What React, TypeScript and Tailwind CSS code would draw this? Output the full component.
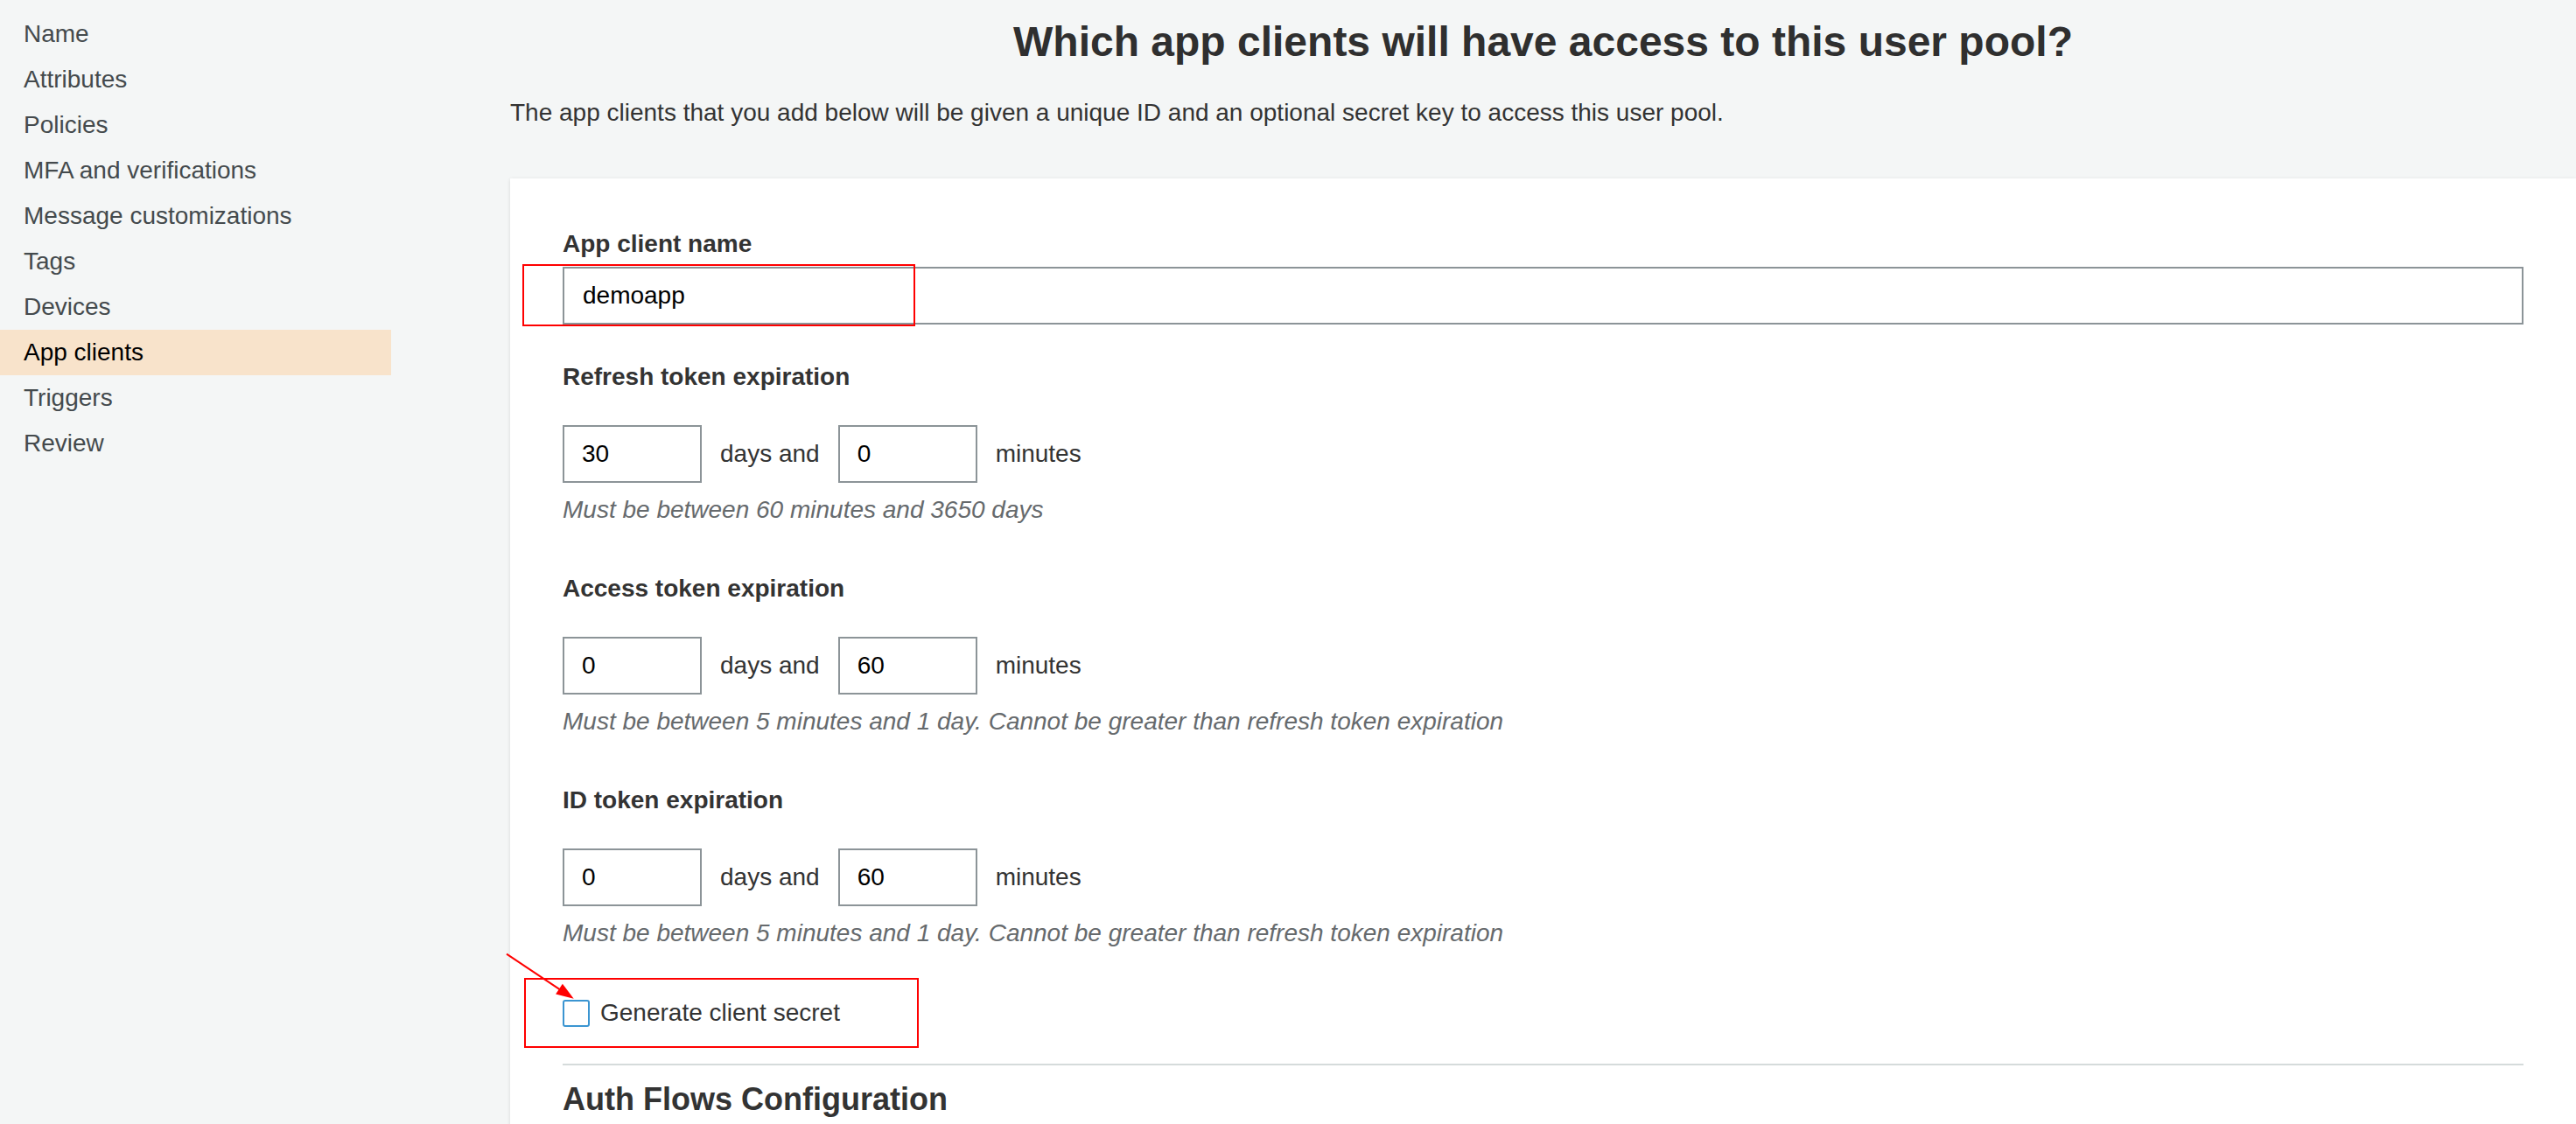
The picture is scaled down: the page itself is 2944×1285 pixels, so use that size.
import React from "react";

const navItems = [
  "Name",
  "Attributes",
  "Policies",
  "MFA and verifications",
  "Message customizations",
  "Tags",
  "Devices",
  "App clients",
  "Triggers",
  "Review",
];

const Sidebar = () => (
  <nav className="w-[447px] shrink-0 pt-[13px]">
    {navItems.map((item) => (
      <div
        key={item}
        className={
          item === "App clients"
            ? "h-[52px] px-[27px] text-[28px] leading-[52px] text-black bg-[#f8e3cb]"
            : "h-[52px] px-[27px] text-[28px] leading-[52px] text-[#444a4d]"
        }
      >
        {item}
      </div>
    ))}
  </nav>
);

type ExpiryProps = {
  label: string;
  days: string;
  minutes: string;
  hint: string;
};

const ExpiryField = ({ label, days, minutes, hint }: ExpiryProps) => (
  <div>
    <div className="text-[28px] leading-[40px] font-bold text-[#333]">{label}</div>
    <div className="mt-[35px] flex items-center gap-[21px] text-[28px] text-[#333]">
      <div className="w-[159px] h-[66px] border-2 border-[#8c9498] bg-white pl-[20px] flex items-center text-black">
        {days}
      </div>
      <span>days and</span>
      <div className="w-[159px] h-[66px] border-2 border-[#8c9498] bg-white pl-[20px] flex items-center text-black">
        {minutes}
      </div>
      <span>minutes</span>
    </div>
    <div className="mt-[11px] text-[28px] leading-[40px] italic text-[#666a6d]">{hint}</div>
  </div>
);

export default function App() {
  return (
    <div
      className="h-screen overflow-hidden flex bg-[#f4f6f6]"
      style={{ fontFamily: '"Liberation Sans", Arial, sans-serif' }}
    >
      <Sidebar />

      <main className="flex-1 pl-[136px]">
        <h1 className="pt-[20px] text-center text-[48px] leading-[56px] font-bold text-[#2f2f2f]">
          Which app clients will have access to this user pool?
        </h1>
        <p className="mt-[33px] text-[28px] leading-[40px] text-[#333]">
          The app clients that you add below will be given a unique ID and an optional secret key to access this user pool.
        </p>

        <section className="relative mt-[55px] bg-white shadow-[0_1px_4px_rgba(0,0,0,0.12)] pl-[60px] pr-[60px] pt-[55px] pb-[60px]">
          <div className="text-[28px] leading-[40px] font-bold text-[#333]">App client name</div>
          <div className="mt-[6px] h-[66px] border-2 border-[#8c9498] pl-[21px] flex items-center text-[28px] text-black">
            demoapp
          </div>

          <div className="mt-[40px] flex flex-col gap-[50px]">
            <ExpiryField
              label="Refresh token expiration"
              days="30"
              minutes="0"
              hint="Must be between 60 minutes and 3650 days"
            />
            <ExpiryField
              label="Access token expiration"
              days="0"
              minutes="60"
              hint="Must be between 5 minutes and 1 day. Cannot be greater than refresh token expiration"
            />
            <ExpiryField
              label="ID token expiration"
              days="0"
              minutes="60"
              hint="Must be between 5 minutes and 1 day. Cannot be greater than refresh token expiration"
            />
          </div>

          <label className="mt-[51px] h-[40px] flex items-center gap-[12px] text-[28px] text-[#333]">
            <span className="w-[31px] h-[31px] border-2 border-[#3b95d1] rounded-[3px] bg-white" />
            Generate client secret
          </label>

          <div className="mt-[38px] h-[2px] bg-[#d5dbdb]" />

          <h2 className="mt-[17px] text-[36px] leading-[44px] font-bold text-[#333]">Auth Flows Configuration</h2>

          {/* annotation overlays */}
          <div className="absolute left-[14px] top-[98px] w-[449px] h-[71px] border-2 border-[#ff0000]" />
          <div className="absolute left-[16px] top-[914px] w-[451px] h-[80px] border-2 border-[#ff0000]" />
          <svg
            className="absolute left-[-10px] top-[880px] w-[100px] h-[70px] overflow-visible"
            viewBox="0 0 100 70"
          >
            <line x1="6" y1="6.7" x2="67" y2="47.3" stroke="#ff0000" strokeWidth="2" />
            <polygon points="82.7,57.7 62.1,52.4 69.9,40.8" fill="#ff0000" />
          </svg>
        </section>
      </main>
    </div>
  );
}
